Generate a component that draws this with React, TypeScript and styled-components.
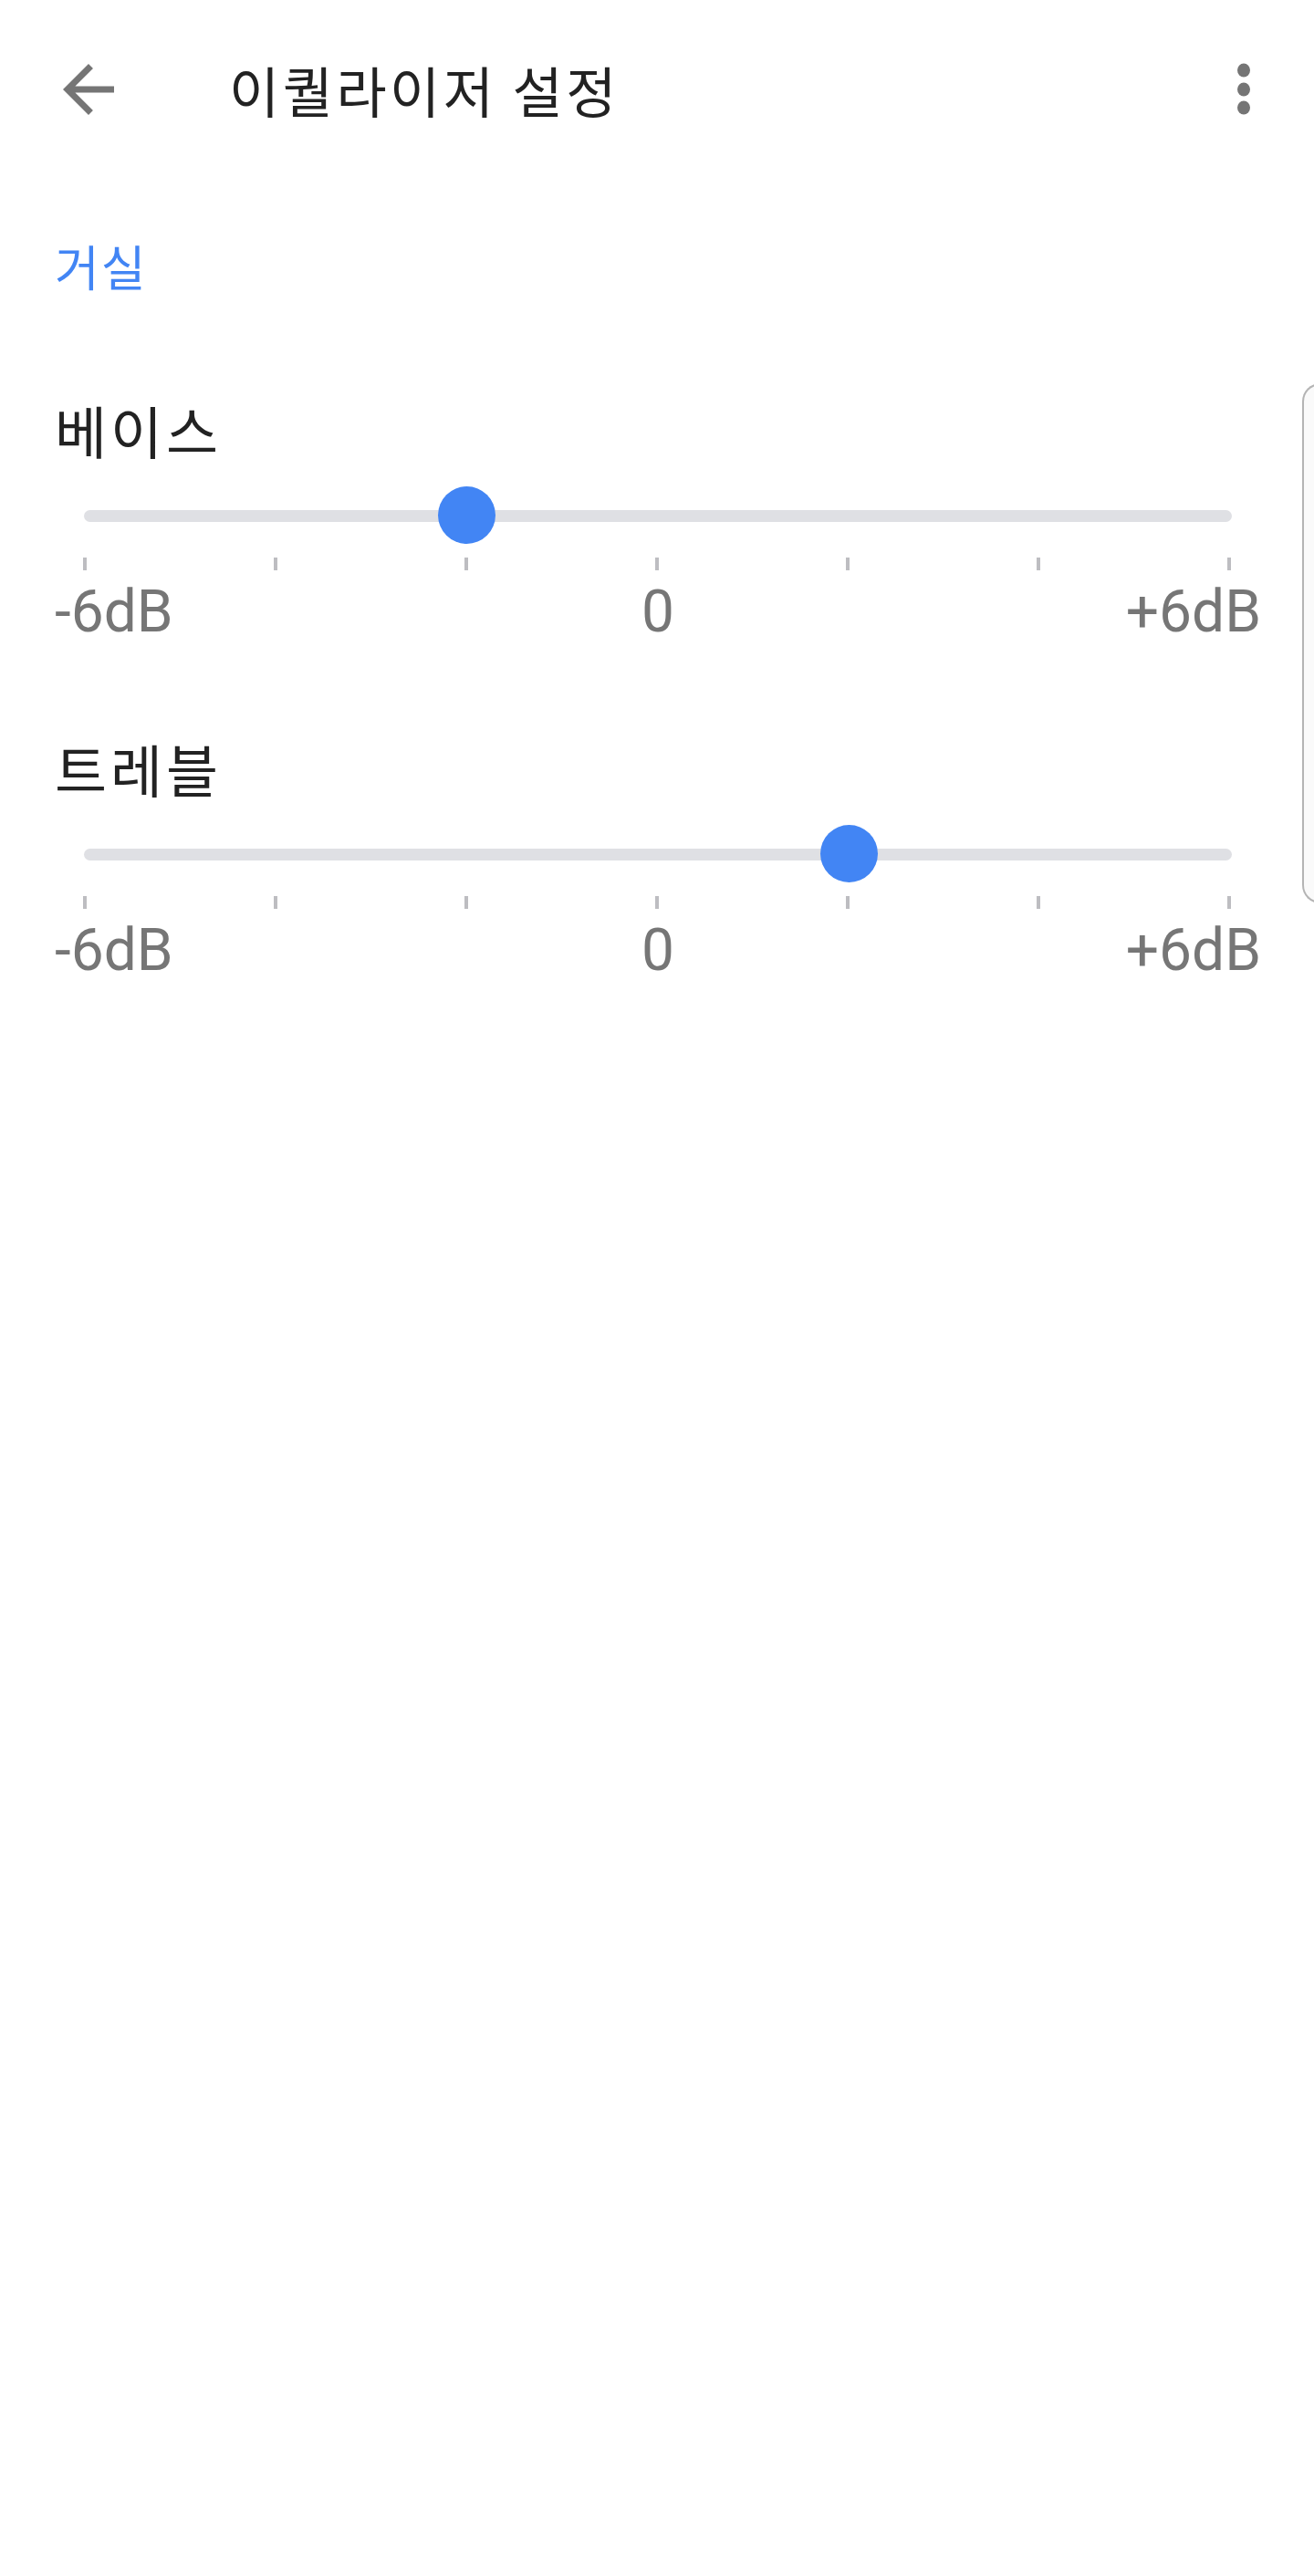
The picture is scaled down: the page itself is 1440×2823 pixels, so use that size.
import styled, { createGlobalStyle } from 'styled-components';

interface Band {
    name: string;
    value: number;
}

const MIN = -6;
const MAX = 6;
const STEP = 2;

const bands: Band[] = [
    { name: '베이스', value: -2 },
    { name: '트레블', value: 2 },
];

const GlobalStyle = createGlobalStyle`
    html, body {
        margin: 0;
        padding: 0;
        background: #ffffff;
    }
    body {
        font-family: "Noto Sans CJK KR", "Noto Sans", sans-serif;
        color: #222222;
    }
`;

const Page = styled.div`
    position: relative;
    width: 1440px;
    min-height: 2823px;
    background: #ffffff;
    overflow: hidden;
`;

const Header = styled.header`
    display: flex;
    flex-direction: row;
    align-items: center;
    height: 196px;
    padding: 0 35px 0 55px;
    box-sizing: border-box;
`;

const IconButton = styled.button`
    display: flex;
    align-items: center;
    justify-content: center;
    width: 84px;
    height: 84px;
    padding: 0;
    border: none;
    background: transparent;
    color: #757575;
`;

const Title = styled.h1`
    flex: 1;
    margin: 0 0 0 112px;
    font-size: 60px;
    font-weight: 400;
    letter-spacing: 3.5px;
    line-height: 1;
    color: #222222;
`;

const Content = styled.main`
    display: flex;
    flex-direction: column;
    padding: 0 58px 0 60px;
`;

const Category = styled.div`
    margin-top: 69px;
    font-size: 53px;
    letter-spacing: 2px;
    line-height: 1;
    color: #4285f4;
`;

const BandBox = styled.section`
    display: flex;
    flex-direction: column;
    margin-top: 122px;

    & + & {
        margin-top: 108px;
    }
`;

const BandName = styled.div`
    font-size: 62px;
    letter-spacing: 4px;
    line-height: 1;
    color: #222222;
`;

const SliderArea = styled.div`
    position: relative;
    height: 64px;
    margin: 31px 32px 0 32px;
    display: flex;
    align-items: center;
`;

const Track = styled.div`
    width: 100%;
    height: 13px;
    border-radius: 7px;
    background: #dfe0e4;
`;

const Thumb = styled.div`
    position: absolute;
    top: 0;
    width: 63px;
    height: 63px;
    margin-left: -31.5px;
    border-radius: 50%;
    background: #4285f4;
`;

const Ticks = styled.div`
    display: flex;
    justify-content: space-between;
    margin: 14px 33px 0 31px;
`;

const Tick = styled.span`
    width: 4px;
    height: 14px;
    background: #bdbdc1;
`;

const Labels = styled.div`
    display: grid;
    grid-template-columns: 1fr auto 1fr;
    margin-top: 14px;
    font-family: Roboto, "Liberation Sans", sans-serif;
    font-size: 64px;
    line-height: 1;
    color: #767676;
`;

const Label = styled.span<{ $align: 'left' | 'center' | 'right' }>`
    text-align: ${(p) => p.$align};
`;

const EdgeHandle = styled.div`
    position: absolute;
    top: 420px;
    left: 1427px;
    width: 40px;
    height: 570px;
    box-sizing: border-box;
    border: 2px solid #b4b4b4;
    border-right: none;
    border-radius: 20px 0 0 20px;
    background: #fafafa;
`;

function BackIcon() {
    return (
        <svg width="84" height="84" viewBox="0 0 24 24" fill="currentColor">
            <path d="M20 11H7.83l5.59-5.59L12 4l-8 8 8 8 1.41-1.41L7.83 13H20v-2z" />
        </svg>
    );
}

function MoreIcon() {
    return (
        <svg width="84" height="84" viewBox="0 0 84 84" fill="currentColor">
            <ellipse cx="42" cy="21" rx="7" ry="7.5" />
            <ellipse cx="42" cy="42" rx="7" ry="7.5" />
            <ellipse cx="42" cy="62" rx="7" ry="7.5" />
        </svg>
    );
}

function BandSlider({ name, value }: Band) {
    const percent = ((value - MIN) / (MAX - MIN)) * 100;
    const tickCount = (MAX - MIN) / STEP + 1;
    return (
        <BandBox>
            <BandName>{name}</BandName>
            <SliderArea>
                <Track />
                <Thumb style={{ left: `${percent}%` }} />
            </SliderArea>
            <Ticks>
                {Array.from({ length: tickCount }).map((_, i) => (
                    <Tick key={i} />
                ))}
            </Ticks>
            <Labels>
                <Label $align="left">-6dB</Label>
                <Label $align="center">0</Label>
                <Label $align="right">+6dB</Label>
            </Labels>
        </BandBox>
    );
}

export default function App() {
    return (
        <Page>
            <GlobalStyle />
            <Header>
                <IconButton aria-label="뒤로">
                    <BackIcon />
                </IconButton>
                <Title>이퀄라이저 설정</Title>
                <IconButton aria-label="더보기">
                    <MoreIcon />
                </IconButton>
            </Header>
            <Content>
                <Category>거실</Category>
                {bands.map((b) => (
                    <BandSlider key={b.name} name={b.name} value={b.value} />
                ))}
            </Content>
            <EdgeHandle />
        </Page>
    );
}
